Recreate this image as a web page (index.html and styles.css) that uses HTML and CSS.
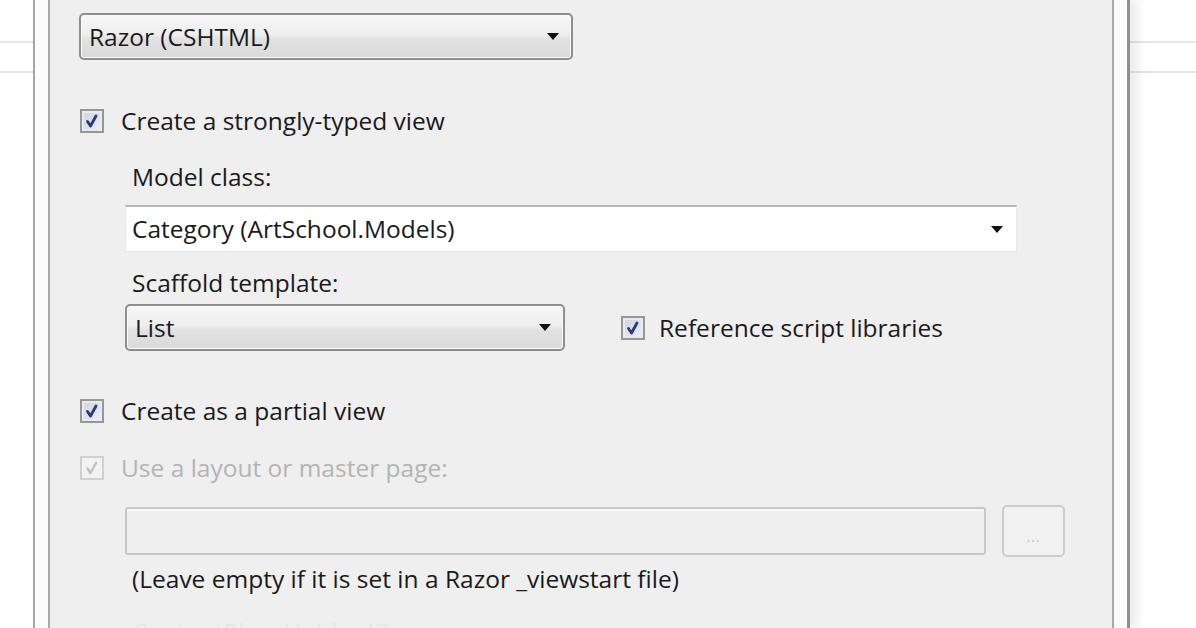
FILE: index.html
```html
<!DOCTYPE html>
<html>
<head>
<meta charset="utf-8">
<link rel="stylesheet" href="styles.css">
</head>
<body>
<div class="screen">
  <div class="frame">
    <div class="dialog">
      <div class="combo combo-razor">
        <span class="combo-text">Razor (CSHTML)</span>
        <span class="arrow"></span>
      </div>

      <label class="check-row row-typed">
        <span class="checkbox"><svg viewBox="0 0 24 24" width="24" height="24"><path d="M7.5 12.5 L10.5 17 L16 7" fill="none" stroke="#2b3a78" stroke-width="2.8" stroke-linecap="round" stroke-linejoin="round"/></svg></span>
        <span class="check-text">Create a strongly-typed view</span>
      </label>

      <div class="indent">
        <div class="label label-model">Model class:</div>
        <div class="editcombo">
          <span class="combo-text">Category (ArtSchool.Models)</span>
          <span class="arrow"></span>
        </div>
        <div class="label label-scaffold">Scaffold template:</div>
        <div class="scaffold-row">
          <div class="combo combo-list">
            <span class="combo-text">List</span>
            <span class="arrow"></span>
          </div>
          <label class="check-row row-ref">
            <span class="checkbox"><svg viewBox="0 0 24 24" width="24" height="24"><path d="M7.5 12.5 L10.5 17 L16 7" fill="none" stroke="#2b3a78" stroke-width="2.8" stroke-linecap="round" stroke-linejoin="round"/></svg></span>
            <span class="check-text">Reference script libraries</span>
          </label>
        </div>
      </div>

      <label class="check-row row-partial">
        <span class="checkbox"><svg viewBox="0 0 24 24" width="24" height="24"><path d="M7.5 12.5 L10.5 17 L16 7" fill="none" stroke="#2b3a78" stroke-width="2.8" stroke-linecap="round" stroke-linejoin="round"/></svg></span>
        <span class="check-text">Create as a partial view</span>
      </label>

      <label class="check-row row-layout disabled">
        <span class="checkbox"><svg viewBox="0 0 24 24" width="24" height="24"><path d="M7.5 12.5 L10.5 17 L16 7" fill="none" stroke="#c2c2c2" stroke-width="2.4" stroke-linecap="round" stroke-linejoin="round"/></svg></span>
        <span class="check-text">Use a layout or master page:</span>
      </label>

      <div class="indent">
        <div class="path-row">
          <div class="textbox"></div>
          <div class="browse">...</div>
        </div>
        <div class="label note">(Leave empty if it is set in a Razor _viewstart file)</div>
        <div class="label faint">ContentPlaceHolder ID:</div>
      </div>
    </div>
  </div>
</div>
</body>
</html>
```
FILE: styles.css
```css
html, body {
  margin: 0;
  padding: 0;
}
body {
  width: 1196px;
  height: 628px;
  overflow: hidden;
  background-color: #ffffff;
  background-image:
    linear-gradient(#e6e6e6, #e6e6e6),
    linear-gradient(#e6e6e6, #e6e6e6);
  background-size: 100% 2px, 100% 2px;
  background-position: 0 41px, 0 71px;
  background-repeat: no-repeat;
  font-family: "Open Sans", "Noto Sans", sans-serif;
  color: #1a1a1a;
}
.screen {
  height: 628px;
  display: flex;
}
.frame {
  margin-left: 33px;
  width: 1097px;
  height: 628px;
  flex: none;
  box-sizing: border-box;
  background: #fbfbfb;
  border-left: 2px solid #a6a6a6;
  border-right: 3px solid #8f8f8f;
  padding: 0 13px;
  box-shadow: 8px 0 10px rgba(0,0,0,0.08);
}
.dialog {
  height: 628px;
  box-sizing: border-box;
  background: #efefef;
  border-left: 2px solid #a8a8a8;
  border-right: 2px solid #a8a8a8;
  padding-left: 29px;
  display: flex;
  flex-direction: column;
  overflow: hidden;
}
.dialog > *, .indent > * {
  flex-shrink: 0;
}
.combo {
  box-sizing: border-box;
  height: 47px;
  border: 2px solid #8e8e8e;
  border-radius: 5px;
  background: linear-gradient(#f6f6f6 0%, #eeeeee 45%, #e2e2e2 55%, #dadada 100%);
  box-shadow: inset 0 0 0 1px #fafafa;
  display: flex;
  align-items: center;
  padding-left: 8px;
  flex: none;
}
.combo-razor {
  margin-top: 13px;
  width: 494px;
}
.combo-text {
  font-size: 24.5px;
  line-height: 30px;
  color: #1a1a1a;
  flex: 1;
  white-space: nowrap;
}
.arrow {
  width: 0;
  height: 0;
  border-left: 6px solid transparent;
  border-right: 6px solid transparent;
  border-top: 7px solid #111;
  margin-right: 12px;
}
.check-row {
  display: flex;
  align-items: center;
  height: 30px;
  gap: 17px;
}
.checkbox {
  width: 24px;
  height: 24px;
  flex: none;
  box-sizing: border-box;
  border: 2px solid #979797;
  background: linear-gradient(135deg, #cdd1e3, #eef0f8);
  box-shadow: inset 0 0 0 2px #e9ebf3;
  display: flex;
  align-items: center;
  justify-content: center;
  margin-left: 1px;
}
.checkbox svg {
  flex: none;
}
.check-text {
  font-size: 24.5px;
  line-height: 30px;
  color: #1a1a1a;
  white-space: nowrap;
}
.row-typed { margin-top: 46px; }
.indent {
  padding-left: 46px;
  display: flex;
  flex-direction: column;
}
.label {
  font-size: 24.5px;
  line-height: 30px;
  height: 30px;
  color: #1a1a1a;
  padding-left: 7px;
  white-space: nowrap;
}
.label-model { margin-top: 26px; }
.editcombo {
  margin-top: 13px;
  width: 892px;
  height: 47px;
  box-sizing: border-box;
  background: #ffffff;
  border: 1px solid #e6e6e6;
  border-top: 2px solid #b5b5b5;
  display: flex;
  align-items: center;
  padding-left: 6px;
}
.editcombo .arrow { margin-right: 13px; }
.label-scaffold { margin-top: 16px; }
.scaffold-row {
  margin-top: 6px;
  display: flex;
  align-items: center;
}
.combo-list {
  width: 440px;
}
.row-ref {
  margin-left: 55px;
  gap: 14px;
}
.row-partial { margin-top: 45px; }
.row-layout { margin-top: 27px; }
.disabled .checkbox {
  border-color: #d0d0d0;
  background: #f2f2f2;
  box-shadow: none;
}
.disabled .check-text { color: #b4b4b4; }
.path-row {
  margin-top: 22px;
  display: flex;
  align-items: center;
  height: 52px;
}
.textbox {
  width: 861px;
  height: 48px;
  flex: none;
  box-sizing: border-box;
  border: 2px solid #c8c8c8;
  border-radius: 3px;
  background: #efefef;
  box-shadow: inset 0 2px 0 #f8f8f8;
}
.browse {
  margin-left: 16px;
  width: 63px;
  height: 52px;
  flex: none;
  box-sizing: border-box;
  border: 2px solid #cccccc;
  border-radius: 5px;
  background: #f1f1f1;
  color: #c2c2c2;
  font-size: 14px;
  letter-spacing: 1px;
  display: flex;
  align-items: center;
  justify-content: center;
  padding-top: 10px;
}
.note { margin-top: 7px; }
.faint {
  margin-top: 23px;
  color: #e6e6e6;
}
```
